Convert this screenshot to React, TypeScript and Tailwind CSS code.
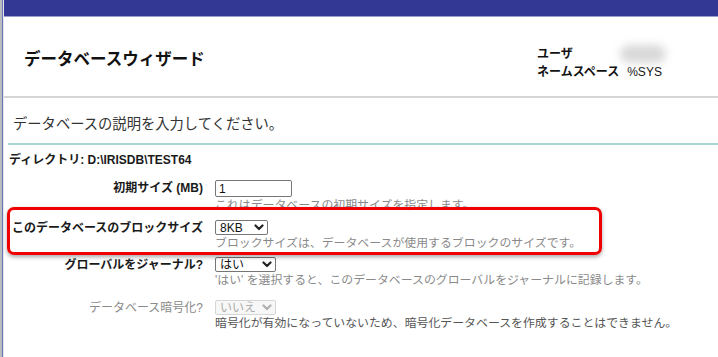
import React from "react";

const F = { fontFamily: '"Liberation Sans", "Noto Sans CJK JP", sans-serif' };

function Chevron({ color = "#222" }: { color?: string }) {
  return (
    <svg width="10" height="7" viewBox="0 0 10 7" className="shrink-0">
      <path d="M1.5 1.5 L5 5 L8.5 1.5" fill="none" stroke={color} strokeWidth="2.2" strokeLinecap="round" strokeLinejoin="round" />
    </svg>
  );
}

function Select({ value, width, disabled }: { value: string; width: string; disabled?: boolean }) {
  return (
    <div
      className={
        "flex h-[15px] items-center justify-between rounded-[2px] border pl-[4px] pr-[3px] text-[12px] leading-none " +
        width +
        (disabled ? " border-[#d6d6d6] bg-[#f7f7f7] text-[#aaaaaa]" : " border-[#767676] bg-white text-[#111]")
      }
    >
      <span>{value}</span>
      <Chevron color={disabled ? "#b0b0b0" : "#222"} />
    </div>
  );
}

function Row({
  label,
  control,
  help,
  labelClass = "font-bold text-[#1a1a1a]",
  helpClass = "text-[#8a8a8a]",
  mt,
}: {
  label: string;
  control: React.ReactNode;
  help: string;
  labelClass?: string;
  helpClass?: string;
  mt: string;
}) {
  return (
    <div className={"flex " + mt}>
      <div className={"w-[199px] shrink-0 pt-[1px] text-right text-[12px] leading-[15px] " + labelClass}>{label}</div>
      <div className="ml-[12px] flex flex-col">
        {control}
        <div className={"mt-[1px] text-[11.9px] leading-[14px] " + helpClass}>{help}</div>
      </div>
    </div>
  );
}

export default function App() {
  return (
    <div className="relative flex h-[357px] w-[718px] overflow-hidden bg-white" style={F}>
      <div className="w-[2px] shrink-0 bg-[#b9bdc0]" />
      <div className="w-[1px] shrink-0 bg-[#6a74b4]" />
      <div className="w-[1px] shrink-0 bg-[#e4e6f0]" />
      <div className="flex min-w-0 flex-1 flex-col">
        <div className="h-[16px] bg-[#333894]" />
        <div className="h-[1px] bg-[#9aa0cc]" />
        <div className="flex h-[79px]">
          <div className="w-[533px] pl-[20px] pt-[32px] text-[16.5px] font-bold leading-[20px] text-[#111]">
            データベースウィザード
          </div>
          <div className="flex flex-col pt-[28px] text-[12px] leading-[18px] text-[#111]">
            <div className="flex items-center">
              <span className="w-[83px] font-bold">ユーザ</span>
              <div className="h-[18px] w-[46px] rounded-full bg-[#d9d9d9] blur-[4px]" />
            </div>
            <div className="flex">
              <span className="font-bold">ネームスペース</span>
              <span className="ml-[8px]">%SYS</span>
            </div>
          </div>
        </div>
        <div className="h-[2px] bg-[#d6d6d6]" />
        <div className="pl-[9px] pt-[17px] text-[14.3px] leading-[18px] text-[#333]">
          データベースの説明を入力してください。
        </div>
        <div className="ml-[4px] mt-[10px] h-[2px] bg-[#a6d4d4]" />
        <div className="pl-[5px] pt-[8px] text-[12px] font-bold leading-[14px] text-[#1a1a1a]">
          ディレクトリ: D:\IRISDB\TEST64
        </div>
        <Row
          mt="mt-[13px]"
          label="初期サイズ (MB)"
          control={
            <div className="flex h-[17px] w-[77px] items-center rounded-[2px] border border-[#767676] pl-[3px] text-[12px] text-[#111]">
              1
            </div>
          }
          help="これはデータベースの初期サイズを指定します。"
        />
        <Row
          mt="mt-[8px]"
          label="このデータベースのブロックサイズ"
          control={<Select value="8KB" width="w-[53px]" />}
          help="ブロックサイズは、データベースが使用するブロックのサイズです。"
        />
        <Row
          mt="mt-[7px]"
          label="グローバルをジャーナル?"
          control={<Select value="はい" width="w-[61px]" />}
          help="'はい' を選択すると、このデータベースのグローバルをジャーナルに記録します。"
        />
        <Row
          mt="mt-[13px]"
          label="データベース暗号化?"
          labelClass="font-normal text-[#8a8a8a]"
          helpClass="text-[#555]"
          control={<Select value="いいえ" width="w-[61px]" disabled />}
          help="暗号化が有効になっていないため、暗号化データベースを作成することはできません。"
        />
      </div>
      <div className="pointer-events-none absolute left-[7px] top-[207px] h-[48px] w-[595px] rounded-[7px] border-[3px] border-[#f00000] shadow-[0_2px_4px_rgba(0,0,0,0.35)]" />
    </div>
  );
}
